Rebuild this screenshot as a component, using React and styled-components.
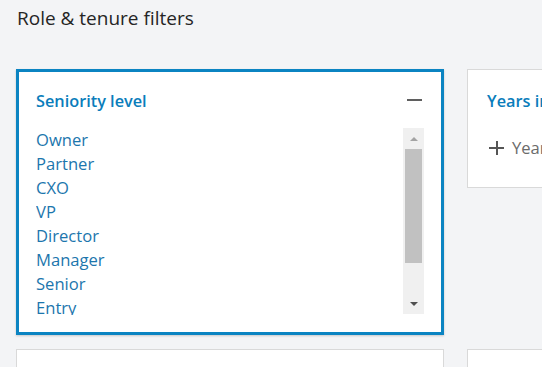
import styled, { createGlobalStyle } from "styled-components";

const GlobalStyle = createGlobalStyle`
  html, body {
    margin: 0;
    padding: 0;
    background: #f3f4f6;
    font-family: "Open Sans", "Noto Sans", sans-serif;
    overflow: hidden;
  }
`;

const Page = styled.div`
  width: 542px;
  height: 367px;
  overflow: hidden;
  padding: 0 0 0 16px;
  box-sizing: border-box;
`;

const PageTitle = styled.h2`
  margin: 0;
  padding: 5px 0 0 1px;
  height: 69px;
  box-sizing: border-box;
  font-size: 19px;
  font-weight: 400;
  line-height: 26px;
  color: #252525;
`;

const Grid = styled.div`
  display: grid;
  grid-template-columns: 428px 428px;
  column-gap: 23px;
  row-gap: 14px;
  align-items: start;
`;

const Card = styled.section`
  background: #fff;
  box-sizing: border-box;
  border: ${(p) => (p.$open ? "3px solid #0b84c2" : "1px solid #d9d9d9")};
  padding: ${(p) => (p.$open ? "17px 17px 18px" : "19px")};
  box-shadow: ${(p) => (p.$open ? "0 1px 2px rgba(0,0,0,0.18)" : "none")};
  height: ${(p) => p.$h}px;
`;

const CardHeader = styled.div`
  display: flex;
  align-items: center;
  justify-content: space-between;
  height: 24px;
`;

const CardTitle = styled.h3`
  margin: 0;
  font-size: 16.3px;
  font-weight: 600;
  line-height: 24px;
  color: #0a7dbb;
  white-space: nowrap;
`;

const Minus = styled.span`
  display: block;
  width: 15px;
  height: 2px;
  background: #5f5f5f;
  margin: 0 2px 3px 0;
`;

const ListWrap = styled.div`
  display: flex;
  margin-top: 15px;
  height: 187px;
`;

const List = styled.ul`
  flex: 1;
  list-style: none;
  margin: 0;
  padding: 0;
  overflow: hidden;
`;

const Item = styled.li`
  font-size: 16.6px;
  line-height: 24px;
  color: #1c76ad;
`;

const Scrollbar = styled.div`
  width: 21px;
  height: 186px;
  background: #f0f0f0;
  display: flex;
  flex-direction: column;
  align-items: center;
  box-sizing: border-box;
  padding: 0 2px;
`;

const Arrow = styled.div`
  height: 21px;
  display: flex;
  align-items: center;
  justify-content: center;
  &::before {
    content: "";
    border-left: 4px solid transparent;
    border-right: 4px solid transparent;
    ${(p) =>
      p.$up
        ? "border-bottom: 4px solid #a3a3a3;"
        : "border-top: 4px solid #505050;"}
  }
`;

const Track = styled.div`
  flex: 1;
  width: 100%;
`;

const Thumb = styled.div`
  width: 100%;
  height: 114px;
  background: #c1c1c1;
`;

const AddRow = styled.div`
  display: flex;
  align-items: center;
  gap: 8px;
  margin-top: 23px;
  margin-left: 2px;
  font-size: 16.6px;
  line-height: 24px;
  color: #6b6b6b;
  white-space: nowrap;
`;

const Plus = styled.span`
  position: relative;
  flex: none;
  width: 15px;
  height: 14px;
  &::before,
  &::after {
    content: "";
    position: absolute;
    background: #555;
  }
  &::before {
    left: 0;
    top: 6px;
    width: 15px;
    height: 2px;
  }
  &::after {
    left: 6.5px;
    top: 0;
    width: 2px;
    height: 14px;
  }
`;

const levels = ["Owner", "Partner", "CXO", "VP", "Director", "Manager", "Senior", "Entry"];

export default function App() {
  return (
    <Page>
      <GlobalStyle />
      <PageTitle>Role &amp; tenure filters</PageTitle>
      <Grid>
        <Card $open $h={266}>
          <CardHeader>
            <CardTitle>Seniority level</CardTitle>
            <Minus />
          </CardHeader>
          <ListWrap>
            <List>
              {levels.map((l) => (
                <Item key={l}>{l}</Item>
              ))}
            </List>
            <Scrollbar>
              <Arrow $up />
              <Track>
                <Thumb />
              </Track>
              <Arrow />
            </Scrollbar>
          </ListWrap>
        </Card>
        <Card $h={119}>
          <CardHeader>
            <CardTitle>Years in current company</CardTitle>
          </CardHeader>
          <AddRow>
            <Plus />
            Years in current company
          </AddRow>
        </Card>
        <Card $h={60} />
        <Card $h={60} />
      </Grid>
    </Page>
  );
}
